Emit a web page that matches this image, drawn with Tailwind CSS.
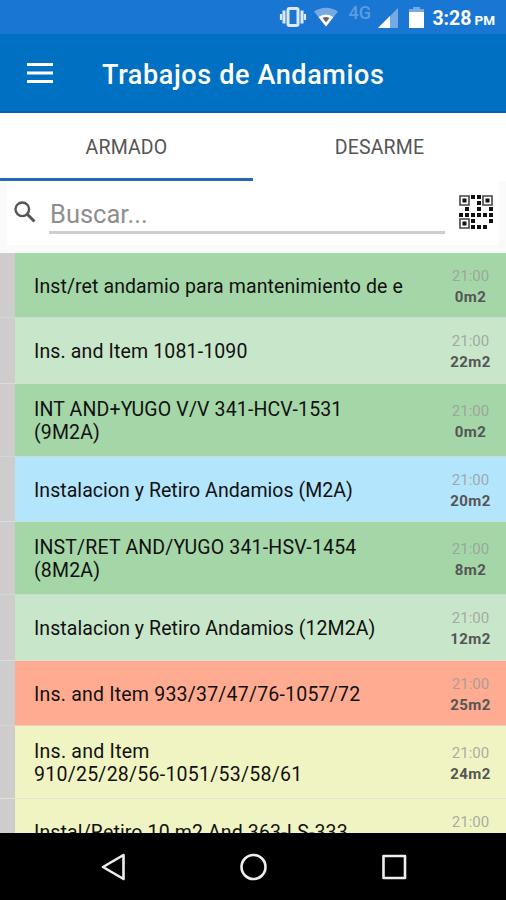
<!DOCTYPE html>
<html lang="es">
<head>
    <meta charset="UTF-8">
    <meta name="viewport" content="width=device-width, initial-scale=1.0">
    <title>Trabajos de Andamios</title>
    <script src="https://cdn.jsdelivr.net/npm/@tailwindcss/browser@4"></script>
</head>
<body class="bg-black font-[Roboto,sans-serif]">
    <div class="flex flex-col w-[506px] h-[900px] overflow-hidden bg-[#fafafa]">
        <!-- Status bar -->
        <div class="flex shrink-0 items-center justify-end h-[34px] pr-[11px] bg-[#1976d2] text-white">
            <svg class="w-[28px] h-[22px] mr-[7px]" viewBox="0 0 28 22" fill="none" stroke="#dfe9fa">
                <rect x="9" y="2.500" width="10" height="17" rx="1.500" stroke-width="3"/>
                <path d="M5 4.500v13M23 4.500v13" stroke-width="3"/>
                <path d="M2 8v6M26 8v6" stroke-width="2.200"/>
            </svg>
            <svg class="w-[24px] h-[20px] mr-[10px]" viewBox="0 0 24 20">
                <path d="M0 4.500Q12-3 24 4.500L12 19.500z" fill="#75aae5"/>
                <path d="M4.500 10Q12 5 19.500 10L12 19.500z" fill="#fff"/>
                <path d="M8.500 11Q12 9 15.500 11L12 15.500z" fill="#6c6470"/>
            </svg>
            <span class="w-[24px] h-[30px] mr-[6px] text-[18px] leading-[22px] font-medium text-[#5c9be0]">4G</span>
            <svg class="w-[20px] h-[20px] mr-[11px] mt-[2px]" viewBox="0 0 20 20">
                <path d="M20 0v20H0z" fill="#75aae5"/>
                <path d="M12 8v12H0z" fill="#fff"/>
            </svg>
            <svg class="w-[15px] h-[21px] mr-[8px] mt-px" viewBox="0 0 15 21">
                <path d="M4 0h7v2h4v4H0V2h4z" fill="#75aae5"/>
                <path d="M0 5h15v16H0z" fill="#fff"/>
            </svg>
            <span class="text-[19.500px] leading-none font-bold mt-[3px]">3:28</span>
            <span class="text-[13.500px] leading-none font-bold ml-[3px] mt-[7px]">PM</span>
        </div>

        <!-- Toolbar -->
        <header class="flex shrink-0 items-center h-[79px] pl-[27px] bg-[#0070c2] border-b-2 border-[#0064b3] text-white">
            <svg class="w-[26px] h-[20px]" viewBox="0 0 26 20" fill="#fff">
                <path d="M0 0h26v3H0zM0 8.500h26v3H0zM0 17h26v3H0z"/>
            </svg>
            <h1 class="ml-[49px] mt-[6px] text-[27px] leading-none font-medium tracking-[0.620px]">Trabajos de Andamios</h1>
        </header>

        <!-- Tabs -->
        <nav class="grid shrink-0 grid-cols-2 h-[68px] bg-white text-[19.500px] text-[#555] text-center leading-[70px]">
            <a class="h-[68px] border-b-3 border-[#2766bd] tracking-[0.150px]">ARMADO</a>
            <a class="tracking-[0.200px]">DESARME</a>
        </nav>

        <!-- Search -->
        <div class="flex shrink-0 h-[72px] px-[7px] bg-[#fafafa]">
            <div class="flex flex-1 h-[64px] bg-white pl-[7px]">
                <svg class="w-[22px] h-[22px] mt-[20px]" viewBox="0 0 22 22" fill="none" stroke="#555" stroke-width="2.400">
                    <circle cx="8.300" cy="8.300" r="6.800"/>
                    <path d="M13 13l7.500 7.500" stroke-width="3"/>
                </svg>
                <div class="ml-[13px] w-[396px] h-[53px] border-b-3 border-[#cecece] pl-px text-[25.500px] leading-[66px] text-[#8e8e8e]">Buscar...</div>
                <svg class="w-[34px] h-[34px] ml-[14px] mt-[14px]" viewBox="0 0 34 34">
                    <g fill="none" stroke="#444" stroke-width="1.600">
                        <path d="M1 1h9v9H1zM24 1h9v9h-9zM1 24h9v9H1z"/>
                    </g>
                    <g fill="#111">
                        <path d="M3.500 3.500h4v4h-4zM26.500 3.500h4v4h-4zM3.500 26.500h4v4h-4z"/>
                        <path d="M12 0h4v4h-4zM18 0h4v4h-4zM18 6h4v4h-4zM6 12h4v4H6zM18 12h4v4h-4zM30 12h4v4h-4z"/>
                        <path d="M0 18h4v4H0zM6 18h4v4H6zM12 18h4v4h-4zM18 18h4v4h-4zM24 18h4v4h-4zM30 18h4v4h-4z"/>
                        <path d="M12 24h4v4h-4zM30 24h4v4h-4zM12 30h4v4h-4zM18 30h4v4h-4zM24 30h4v4h-4z"/>
                    </g>
                </svg>
            </div>
        </div>

        <!-- Job list -->
        <main id="job-list" class="flex-1 min-h-0 overflow-hidden"></main>

        <!-- Navigation bar -->
        <div class="flex shrink-0 items-center h-[67px] bg-black">
            <svg class="w-[506px] h-[67px]" viewBox="0 0 506 67" fill="none" stroke="#eee" stroke-width="2.600" stroke-linejoin="round">
                <path d="M123.500 22v24L103 34z"/>
                <circle cx="253.500" cy="34" r="12"/>
                <rect x="383.500" y="23" width="21.500" height="22"/>
            </svg>
        </div>
    </div>

    <script>
        const jobs = [
            { title: 'Inst/ret andamio para mantenimiento de e', area: '0m2', style: 'h-[65px] bg-[#a5d6a7] tracking-[0.100px]' },
            { title: 'Ins. and Item 1081-1090', area: '22m2', style: 'h-[66px] bg-[#c8e6c9] tracking-[0.140px]' },
            { title: 'INT AND+YUGO V/V 341-HCV-1531<br>(9M2A)', area: '0m2', style: 'h-[73px] bg-[#a5d6a7] tracking-[0.140px]' },
            { title: 'Instalacion y Retiro Andamios (M2A)', area: '20m2', style: 'h-[65px] bg-[#b3e5fc] tracking-[0.050px]' },
            { title: 'INST/RET AND/YUGO 341-HSV-1454<br>(8M2A)', area: '8m2', style: 'h-[73px] bg-[#a5d6a7] tracking-[0.170px]' },
            { title: 'Instalacion y Retiro Andamios (12M2A)', area: '12m2', style: 'h-[66px] bg-[#c8e6c9] tracking-[0.060px]' },
            { title: 'Ins. and Item 933/37/47/76-1057/72', area: '25m2', style: 'h-[65px] bg-[#ffab91] tracking-[0.210px]' },
            { title: 'Ins. and Item<br>910/25/28/56-1051/53/58/61', area: '24m2', style: 'h-[73px] bg-[#f0f4c3] tracking-[0.250px]' },
            { title: 'Instal/Retiro 10 m2 And 363-LS-333', area: '&nbsp;', style: 'h-[65px] bg-[#f0f4c3] tracking-[0.130px]' }
        ];

        document.getElementById('job-list').innerHTML = jobs.map(job => `
            <div class="flex items-stretch border-b border-[#dcdedb]/70 ${job.style}">
                <div class="w-[15px] bg-[#cfcccd]"></div>
                <div class="flex flex-1 items-center pt-[2px] pl-[19px] text-[19.500px] leading-[23px] text-[#111] whitespace-nowrap">
                    <p>${job.title}</p>
                </div>
                <div class="flex flex-col justify-center w-[71px] text-center text-[15px] leading-[21px] pt-[3px] tracking-normal">
                    <p class="text-[#999]/80">21:00</p>
                    <p class="font-bold text-[#555] tracking-[0.400px]">${job.area}</p>
                </div>
            </div>
        `).join('');
    </script>
</body>
</html>
